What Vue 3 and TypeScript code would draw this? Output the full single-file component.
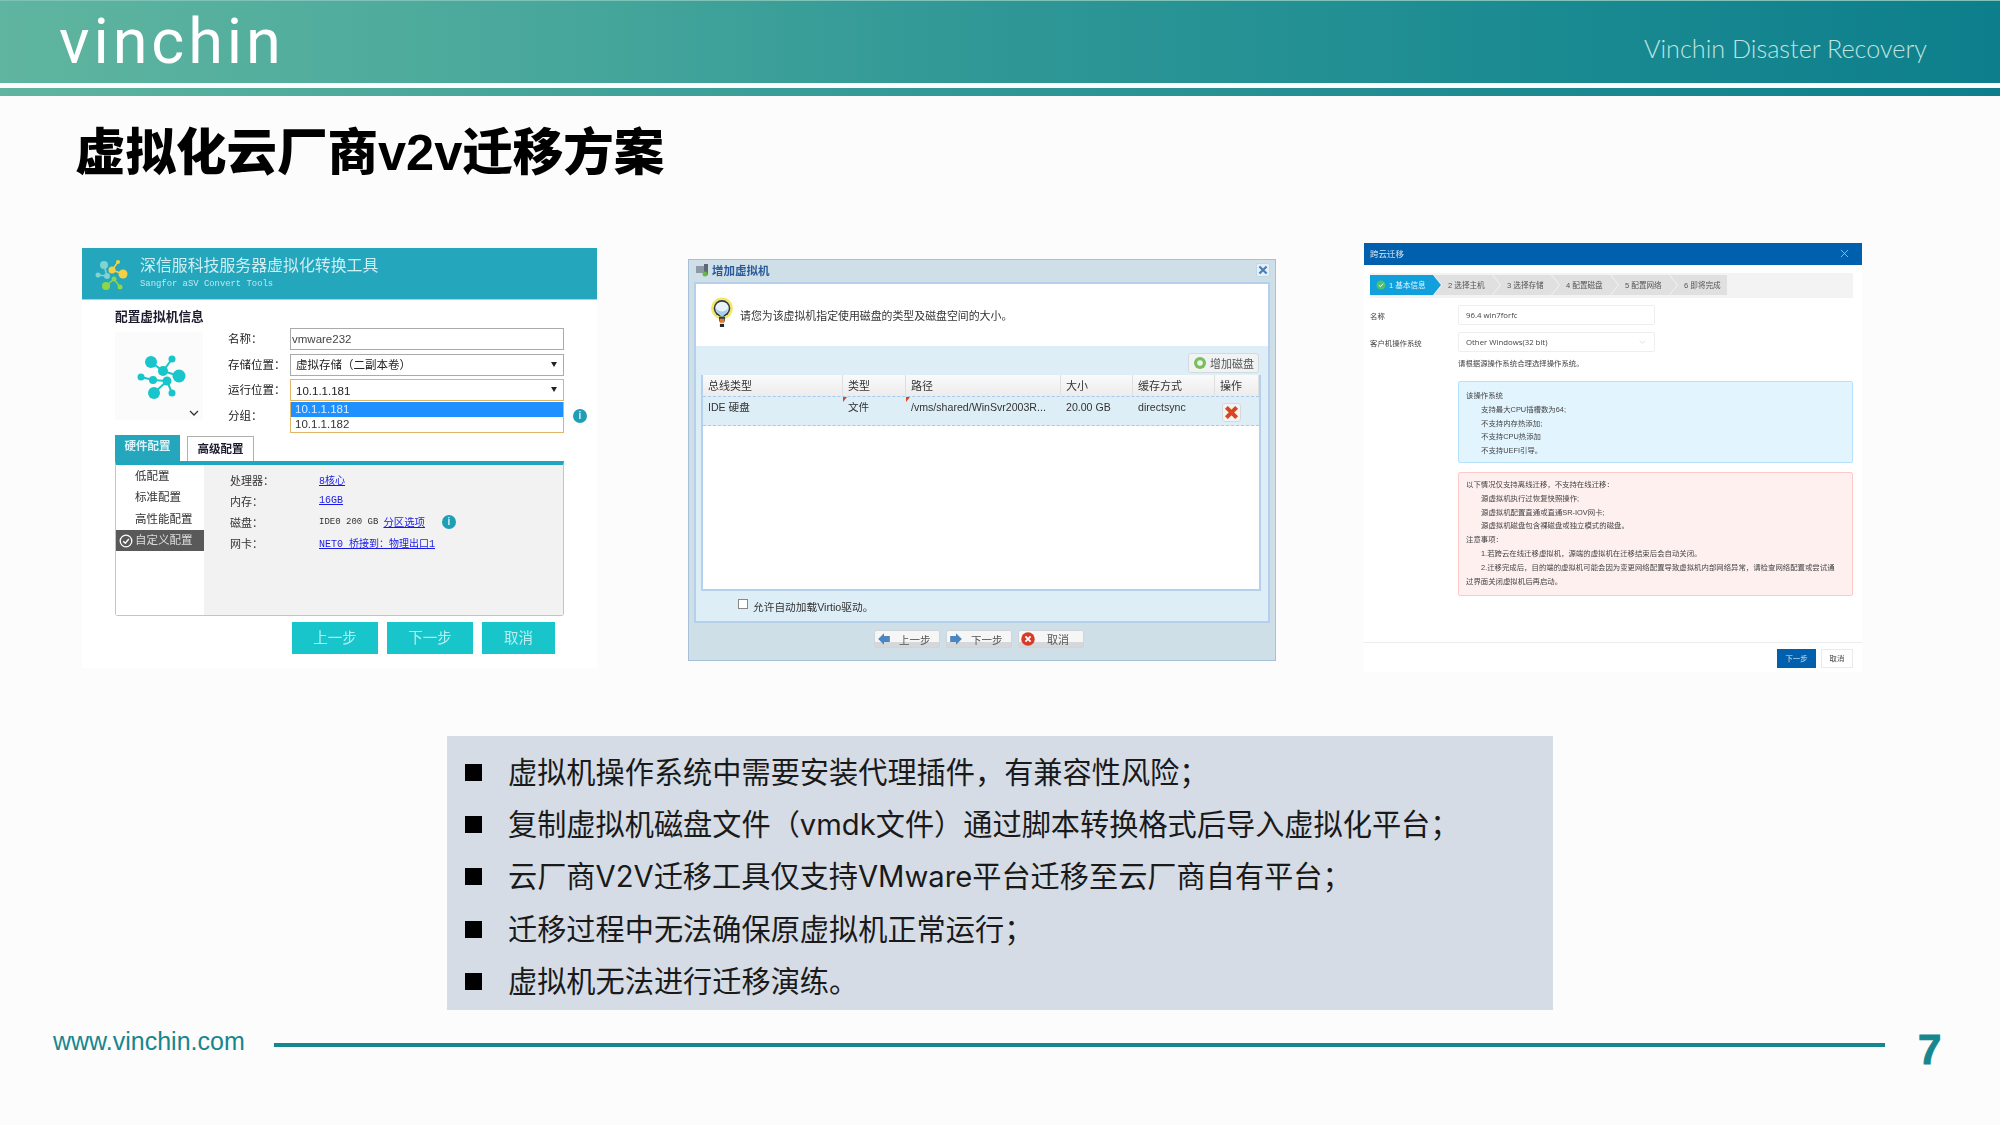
<script setup lang="ts">
const bullets = [
  '虚拟机操作系统中需要安装代理插件，有兼容性风险；',
  '复制虚拟机磁盘文件（vmdk文件）通过脚本转换格式后导入虚拟化平台；',
  '云厂商V2V迁移工具仅支持VMware平台迁移至云厂商自有平台；',
  '迁移过程中无法确保原虚拟机正常运行；',
  '虚拟机无法进行迁移演练。'
]

const profiles = ['低配置', '标准配置', '高性能配置']
const steps = ['2 选择主机', '3 选择存储', '4 配置磁盘', '5 配置网络', '6 即将完成']
const gridHead = ['总线类型', '类型', '路径', '大小', '缓存方式', '操作']

const infoLines = ['支持最大CPU插槽数为64;', '不支持内存热添加;', '不支持CPU热添加', '不支持UEFI引导。']
const offlineLines = ['源虚拟机执行过恢复快照操作;', '源虚拟机配置直通或直通SR-IOV网卡;', '源虚拟机磁盘包含裸磁盘或独立模式的磁盘。']
</script>

<template>
  <div class="slide">
    <header class="top">
      <div class="logo">vinchin</div>
      <div class="tagline">Vinchin Disaster Recovery</div>
    </header>
    <div class="band"></div>
    <h1 class="title">虚拟化云厂商v2v迁移方案</h1>

    <section class="shots">
      <!-- sangfor convert tool -->
      <div class="sf">
        <div class="sf-head">
          <svg class="sf-logo" viewBox="0 0 50 45">
            <g stroke-width="1.5" fill="none">
              <path d="M14 13L17 24M8 23L17 24" stroke="#7fd3d0" />
              <path d="M22 18L33 22M22 18L28 10" stroke="#f6cf45" />
              <path d="M16 34L24 27L30 35" stroke="#8fd646" />
            </g>
            <circle cx="14" cy="13" r="4" fill="#7fd3d0" />
            <circle cx="8" cy="23" r="2.5" fill="#7fd3d0" />
            <circle cx="17" cy="24" r="3" fill="#7fd3d0" />
            <circle cx="33" cy="22" r="4.5" fill="#f6cf45" />
            <circle cx="22" cy="18" r="3.5" fill="#f6cf45" />
            <circle cx="28" cy="10" r="2" fill="#f6cf45" />
            <circle cx="16" cy="34" r="4" fill="#8fd646" />
            <circle cx="24" cy="27" r="2.5" fill="#8fd646" />
            <circle cx="30" cy="35" r="2.5" fill="#8fd646" />
          </svg>
          <div>
            <div class="sf-name">深信服科技服务器虚拟化转换工具</div>
            <div class="sf-sub">Sangfor aSV Convert Tools</div>
          </div>
        </div>
        <div class="sf-body">
          <div class="sf-title">配置虚拟机信息</div>
          <div class="sf-top">
            <div class="sf-preview">
              <svg class="sf-mol" viewBox="0 0 88 88">
                <g stroke="#17c5cb" stroke-width="2" fill="none">
                  <path d="M36 30L48 39L57 27M48 39L64 44M26 45L38 48L52 49L39 61M52 49L57 61" />
                </g>
                <g fill="#17c5cb">
                  <circle cx="36" cy="30" r="6" />
                  <circle cx="57" cy="27" r="3.5" />
                  <circle cx="48" cy="39" r="5" />
                  <circle cx="64" cy="44" r="6.5" />
                  <circle cx="26" cy="45" r="3.5" />
                  <circle cx="38" cy="48" r="4" />
                  <circle cx="52" cy="49" r="4.5" />
                  <circle cx="39" cy="61" r="6" />
                  <circle cx="57" cy="61" r="3.5" />
                </g>
              </svg>
              <svg class="sf-chev" viewBox="0 0 10 6"><path d="M1 1L5 5L9 1" fill="none" stroke="#333" stroke-width="1.3" /></svg>
            </div>
            <div class="sf-form">
              <div class="sf-row">
                <span class="sf-label">名称：</span>
                <div class="sf-input">vmware232</div>
              </div>
              <div class="sf-row">
                <span class="sf-label">存储位置：</span>
                <div class="sf-input sf-select">虚拟存储（二副本卷）<i class="sf-caret"></i></div>
              </div>
              <div class="sf-row">
                <span class="sf-label">运行位置：</span>
                <div class="sf-input sf-select sf-focus">10.1.1.181<i class="sf-caret"></i></div>
              </div>
              <div class="sf-row sf-row-menu">
                <span class="sf-label sf-label-group">分组：</span>
                <div class="sf-menu">
                  <div class="sf-opt sf-opt-on">10.1.1.181</div>
                  <div class="sf-opt">10.1.1.182</div>
                </div>
                <span class="info info-a">i</span>
              </div>
            </div>
          </div>
          <div class="sf-tabs">
            <div class="sf-tab sf-tab-on">硬件配置</div>
            <div class="sf-tab">高级配置</div>
          </div>
          <div class="sf-panel">
            <div class="sf-side">
              <div v-for="p in profiles" :key="p" class="sf-item">{{ p }}</div>
              <div class="sf-item sf-item-on">
                <svg class="sf-check" viewBox="0 0 14 14">
                  <circle cx="7" cy="7" r="5.8" fill="none" stroke="#fff" stroke-width="1.3" />
                  <path d="M4.2 7.2L6.3 9.2L9.8 5" fill="none" stroke="#fff" stroke-width="1.4" />
                </svg>
                自定义配置
              </div>
            </div>
            <div class="sf-main">
              <div class="sf-spec"><span class="sf-key">处理器：</span><a class="sf-link">8核心</a></div>
              <div class="sf-spec"><span class="sf-key">内存：</span><a class="sf-link">16GB</a></div>
              <div class="sf-spec">
                <span class="sf-key">磁盘：</span><span class="sf-mono">IDE0 200 GB</span>
                <a class="sf-link sf-link-part">分区选项</a>
                <span class="info info-b">i</span>
              </div>
              <div class="sf-spec"><span class="sf-key">网卡：</span><a class="sf-link">NET0 桥接到：物理出口1</a></div>
            </div>
          </div>
          <div class="sf-btns">
            <div class="sf-btn">上一步</div>
            <div class="sf-btn">下一步</div>
            <div class="sf-btn sf-btn-s">取消</div>
          </div>
        </div>
      </div>

      <!-- add vm dialog -->
      <div class="az">
        <div class="az-title">
          <svg class="az-pc" viewBox="0 0 14 14">
            <rect x="1" y="3" width="8" height="7" fill="#8d9aa5" />
            <rect x="9" y="1" width="4" height="11" fill="#5d6a75" />
            <circle cx="10" cy="11" r="2.5" fill="#67b84a" />
          </svg>
          <span>增加虚拟机</span>
          <div class="az-close">
            <svg viewBox="0 0 10 10"><path d="M2 2L8 8M8 2L2 8" stroke="#4a7fb5" stroke-width="1.8" /></svg>
          </div>
        </div>
        <div class="az-body">
          <div class="az-tip">
            <svg class="az-bulb" viewBox="1 0 22 30">
              <circle cx="12" cy="11" r="10.5" fill="#f5e66a" />
              <circle cx="12" cy="11" r="8" fill="#2b3a44" />
              <circle cx="12" cy="11" r="6.5" fill="#e8f2fa" />
              <path d="M6 11C9 15 15 15 18 11C17 16 14 17 12 20C10 17 7 16 6 11Z" fill="#a9cdec" />
              <path d="M9 19H15L14.5 24H9.5Z" fill="#2b3a44" />
              <rect x="10" y="21" width="4" height="4" fill="#e87a2a" />
              <rect x="10" y="26" width="4" height="3" fill="#1d2830" />
            </svg>
            <span>请您为该虚拟机指定使用磁盘的类型及磁盘空间的大小。</span>
          </div>
          <div class="az-tools">
            <div class="az-add">
              <svg viewBox="0 0 14 14">
                <circle cx="7" cy="7" r="6" fill="#79bf5e" />
                <circle cx="7" cy="7" r="2.8" fill="#eef6ea" />
              </svg>
              增加磁盘
            </div>
          </div>
          <div class="az-grid">
            <div class="az-cols az-cols-head">
              <span v-for="h in gridHead" :key="h">{{ h }}</span>
            </div>
            <div class="az-cols az-cols-row">
              <span>IDE 硬盘</span>
              <span class="az-dirty">文件</span>
              <span class="az-dirty">/vms/shared/WinSvr2003R...</span>
              <span>20.00 GB</span>
              <span>directsync</span>
              <span>
                <div class="az-del">
                  <svg viewBox="0 0 10 10"><path d="M2 2L8 8M8 2L2 8" stroke="#d8451f" stroke-width="2.4" /></svg>
                </div>
              </span>
            </div>
          </div>
          <div class="az-check"><i></i>允许自动加载Virtio驱动。</div>
        </div>
        <div class="az-foot">
          <div class="az-btn">
            <svg viewBox="0 0 12 12"><path d="M1 6L6 1V3.5H11V8.5H6V11Z" fill="#4c86c0" /></svg>
            <span>上一步</span>
          </div>
          <div class="az-btn">
            <svg viewBox="0 0 12 12"><path d="M11 6L6 1V3.5H1V8.5H6V11Z" fill="#4c86c0" /></svg>
            <span>下一步</span>
          </div>
          <div class="az-btn az-btn-c">
            <svg viewBox="0 0 12 12">
              <circle cx="6" cy="6" r="5.8" fill="#d63b2a" />
              <path d="M3.8 3.8L8.2 8.2M8.2 3.8L3.8 8.2" stroke="#fff" stroke-width="1.6" />
            </svg>
            <span>取消</span>
          </div>
        </div>
      </div>

      <!-- cross cloud migration dialog -->
      <div class="cc">
        <div class="cc-head">
          <span>跨云迁移</span>
          <svg viewBox="0 0 10 10"><path d="M1 1L9 9M9 1L1 9" stroke="#a9c8e2" stroke-width="0.9" /></svg>
        </div>
        <div class="cc-steps">
          <div class="cc-step cc-step-on">
            <svg viewBox="0 0 10 10">
              <circle cx="5" cy="5" r="4.5" fill="#4cc36a" />
              <path d="M2.8 5.2L4.4 6.7L7.2 3.6" fill="none" stroke="#fff" stroke-width="1" />
            </svg>
            1 基本信息
          </div>
          <div v-for="s in steps" :key="s" class="cc-step">{{ s }}</div>
        </div>
        <div class="cc-field">
          <span class="cc-label">名称</span>
          <div class="cc-input">96.4 win7forfc</div>
        </div>
        <div class="cc-field cc-field-os">
          <span class="cc-label">客户机操作系统</span>
          <div class="cc-input">
            Other Windows(32 bit)
            <svg viewBox="0 0 10 6"><path d="M1 1L5 5L9 1" fill="none" stroke="#c5c5c5" stroke-width="0.8" /></svg>
          </div>
        </div>
        <p class="cc-hint">请根据源操作系统合理选择操作系统。</p>
        <div class="cc-box cc-box-info">
          <p>该操作系统</p>
          <p v-for="l in infoLines" :key="l" class="cc-in">{{ l }}</p>
        </div>
        <div class="cc-box cc-box-warn">
          <p>以下情况仅支持离线迁移，不支持在线迁移：</p>
          <p v-for="l in offlineLines" :key="l" class="cc-in">{{ l }}</p>
          <p>注意事项：</p>
          <p class="cc-first">1.若跨云在线迁移虚拟机，源端的虚拟机在迁移结束后会自动关闭。</p>
          <p class="cc-first">2.迁移完成后，目的端的虚拟机可能会因为变更网络配置导致虚拟机内部网络异常，请检查网络配置或尝试通过界面关闭虚拟机后再启动。</p>
        </div>
        <div class="cc-foot">
          <div class="cc-btn cc-btn-on">下一步</div>
          <div class="cc-btn">取消</div>
        </div>
      </div>
    </section>

    <ul class="points">
      <li v-for="b in bullets" :key="b">{{ b }}</li>
    </ul>

    <footer class="foot">
      <span class="site">www.vinchin.com</span>
      <div class="rule"></div>
      <span class="page">7</span>
    </footer>
  </div>
</template>

<style>
html,
body {
  margin: 0;
  background: #fcfcfc;
}
</style>

<style scoped>
.slide {
  width: 2000px;
  height: 1125px;
  overflow: hidden;
  background: #fcfcfc;
  font-family: "Liberation Sans", "Noto Sans CJK SC", sans-serif;
  color: #222;
}

p {
  margin: 0;
}

.top {
  height: 83px;
  box-sizing: border-box;
  padding: 0 73px 0 59px;
  display: flex;
  align-items: center;
  justify-content: space-between;
  border-top: 1px solid #7fc3b8;
  background: linear-gradient(90deg, #5fb59f 0%, #4aa99c 25%, #2f9796 50%, #1c8c92 75%, #0d7f8c 100%);
}

.logo {
  font-family: Roboto, sans-serif;
  font-size: 63px;
  line-height: 72px;
  letter-spacing: 3.9px;
  color: #fff;
}

.tagline {
  font-family: "Lato", sans-serif;
  font-weight: 300;
  font-size: 25.2px;
  color: #bde3e0;
  margin-top: 12px;
}

.band {
  height: 8px;
  margin-top: 5px;
  background: linear-gradient(90deg, #5fb59f 0%, #2f9796 50%, #0d7f8c 100%);
}

.title {
  margin: 26px 0 0 75px;
  height: 60px;
  font-family: "Liberation Sans", "Noto Sans CJK SC", sans-serif;
  font-size: 50.5px;
  line-height: 62px;
  font-weight: 900;
  color: #000;
  white-space: nowrap;
}

.shots {
  display: flex;
  align-items: flex-start;
  height: 429px;
  margin-top: 61px;
  font-size: 11px;
}

.sf,
.az,
.cc {
  filter: blur(0.35px);
  flex: none;
  box-sizing: border-box;
}

/* left screenshot */
.sf {
  width: 515px;
  height: 420px;
  margin: 5px 0 0 82px;
  background: #fff;
}

.sf-head {
  height: 52px;
  display: flex;
  align-items: center;
  background: #24a6bd;
  border-bottom: 1px solid #9ed4de;
  box-sizing: border-box;
}

.sf-logo {
  width: 50px;
  height: 45px;
  margin: 2px 0 0 8px;
  flex: none;
}

.sf-name {
  font-size: 15.9px;
  line-height: 20px;
  color: #cdeef2;
  margin-top: -1px;
}

.sf-sub {
  font-family: "Liberation Mono", monospace;
  font-size: 8.9px;
  line-height: 14px;
  color: #bfe8ee;
  margin-top: 1px;
}

.sf-body {
  padding-left: 33px;
}

.sf-title {
  margin-top: 8px;
  height: 16px;
  font-size: 12.7px;
  line-height: 18px;
  font-weight: 700;
  color: #1c1c2e;
}

.sf-top {
  display: flex;
  margin-top: 4px;
}

.sf-preview {
  position: relative;
  width: 88px;
  height: 88px;
  margin-top: 4px;
  background: #fbfbfb;
}

.sf-mol {
  width: 88px;
  height: 88px;
  display: block;
}

.sf-chev {
  position: absolute;
  left: 74px;
  top: 78px;
  width: 10px;
  height: 6px;
}

.sf-form {
  margin-left: 25px;
  display: flex;
  flex-direction: column;
  gap: 3.5px;
}

.sf-row {
  display: flex;
  align-items: center;
  height: 22px;
}

.sf-row-menu {
  height: 31px;
  align-items: center;
  margin-top: -2.5px;
}

.sf-label {
  width: 62px;
  flex: none;
  font-size: 11.5px;
  color: #222;
  margin-top: -2px;
}

.sf-label-group {
  margin-top: -6px;
}

.sf-input {
  position: relative;
  width: 274px;
  height: 22px;
  box-sizing: border-box;
  border: 1.5px solid #aaa;
  background: #fff;
  font-size: 11.5px;
  line-height: 21px;
  padding-left: 1px;
  color: #444;
}

.sf-select {
  padding-left: 5px;
  color: #222;
}

.sf-focus {
  border-color: #e0b567;
  line-height: 22px;
}

.sf-caret {
  position: absolute;
  right: 6px;
  top: 7px;
  border-left: 3px solid transparent;
  border-right: 3px solid transparent;
  border-top: 5px solid #222;
}

.sf-menu {
  width: 274px;
  height: 31px;
  box-sizing: border-box;
  border: 1px solid #e0b567;
  border-top: 0;
  background: #fff;
}

.sf-opt {
  height: 15px;
  font-size: 11.5px;
  line-height: 15px;
  padding-left: 4px;
  color: #333;
}

.sf-opt-on {
  background: #1e90ff;
  color: #dcedff;
}

.info {
  flex: none;
  width: 14px;
  height: 14px;
  border-radius: 50%;
  background: #1f9eb5;
  color: #d9f2f6;
  text-align: center;
  font-size: 10px;
  line-height: 14px;
  font-weight: 700;
}

.info-a {
  margin: -3px 0 0 9px;
}

.info-b {
  margin-left: 17px;
}

.sf-tabs {
  display: flex;
  gap: 7px;
  align-items: flex-end;
  margin-top: 2px;
  height: 26px;
}

.sf-tab {
  width: 67px;
  height: 25px;
  box-sizing: border-box;
  border: 1.5px solid #b0b0b0;
  border-bottom: 0;
  text-align: center;
  font-size: 11.5px;
  line-height: 24px;
  font-weight: 700;
  color: #1c1c2e;
}

.sf-tab-on {
  width: 65px;
  height: 26px;
  border: 0;
  background: #24a6bd;
  color: #d8f3f7;
  line-height: 23px;
}

.sf-panel {
  width: 449px;
  height: 155px;
  box-sizing: border-box;
  display: flex;
  border: 1px solid #c4c4c4;
  border-top: 4px solid #1fa8bd;
  border-radius: 0 0 3px 3px;
}

.sf-side {
  width: 88px;
  flex: none;
  padding-top: 1px;
  background: #fff;
}

.sf-item {
  height: 21.3px;
  padding-left: 19px;
  font-size: 11.5px;
  line-height: 21.3px;
  color: #333;
}

.sf-item-on {
  position: relative;
  background: #595959;
  color: #ddd;
}

.sf-check {
  position: absolute;
  left: 3px;
  top: 4px;
  width: 14px;
  height: 14px;
}

.sf-main {
  flex: 1;
  padding: 4px 0 0 26px;
  background: #f2f2f2;
}

.sf-spec {
  display: flex;
  align-items: center;
  height: 21px;
}

.sf-key {
  width: 89px;
  flex: none;
  font-size: 11px;
  color: #333;
}

.sf-link {
  font-family: "Liberation Mono", "Noto Sans CJK SC", monospace;
  font-size: 10px;
  color: #1a1ae6;
  text-decoration: underline;
}

.sf-link-part {
  margin-left: 5px;
  font-size: 10.4px;
}

.sf-mono {
  font-family: "Liberation Mono", monospace;
  font-size: 9px;
  color: #333;
}

.sf-btns {
  display: flex;
  gap: 9px;
  margin: 6px 0 0 177px;
}

.sf-btn {
  width: 86px;
  height: 32px;
  background: #17c5cb;
  color: #b9eef0;
  text-align: center;
  font-size: 14.5px;
  line-height: 32px;
}

.sf-btn-s {
  width: 73px;
}

/* middle screenshot */
.az {
  width: 588px;
  height: 402px;
  margin: 16px 0 0 91px;
  background: #cfdfe8;
  border: 1px solid #a5c0d8;
}

.az-title {
  height: 22px;
  box-sizing: border-box;
  display: flex;
  align-items: center;
  padding: 0 5px 2px 6px;
  font-size: 11.5px;
  font-weight: 700;
  color: #2a5a9a;
}

.az-pc {
  width: 14px;
  height: 14px;
  margin-right: 3px;
}

.az-close {
  margin-left: auto;
  width: 12px;
  height: 12px;
  background: #e4eff7;
  border: 1px solid #c3d7e6;
  border-radius: 2px;
}

.az-close svg {
  display: block;
  width: 12px;
  height: 12px;
}

.az-body {
  height: 341px;
  margin: 0 5px;
  box-sizing: border-box;
  border: 2px solid #b4d0ec;
  background: #ddeef7;
}

.az-tip {
  height: 62px;
  display: flex;
  align-items: center;
  padding-left: 14px;
  background: #fff;
  font-size: 10.9px;
  color: #333;
}

.az-bulb {
  width: 24px;
  height: 31px;
  margin: -6px 6px 0 0;
  flex: none;
}

.az-tools {
  height: 29px;
  display: flex;
  justify-content: flex-end;
  padding: 7px 9px 0 0;
  box-sizing: border-box;
}

.az-add {
  width: 71px;
  height: 20px;
  box-sizing: border-box;
  display: flex;
  align-items: center;
  gap: 3px;
  padding-left: 4px;
  border: 1px solid #d3dadf;
  border-radius: 3px;
  background: #f0f2f3;
  font-size: 11px;
  color: #555;
}

.az-add svg {
  width: 14px;
  height: 14px;
}

.az-grid {
  width: 560px;
  height: 216px;
  box-sizing: border-box;
  margin-left: 5px;
  background: #fff;
  border: 2px solid #b4d0ec;
  border-top: 0;
}

.az-cols {
  display: grid;
  grid-template-columns: 140px 63px 155px 72px 82px 44px;
}

.az-cols span {
  position: relative;
  padding-left: 5px;
  white-space: nowrap;
  overflow: hidden;
}

.az-cols-head {
  height: 21px;
  background: linear-gradient(#fafafa, #ececec);
  line-height: 22px;
  font-size: 11px;
  color: #333;
}

.az-cols-head span {
  border-right: 1px solid #dfdfdf;
  box-sizing: border-box;
}

.az-cols-row {
  height: 30px;
  box-sizing: border-box;
  background: #ddeef7;
  border-top: 1px dashed #a9c9e8;
  border-bottom: 1px dashed #a9c9e8;
  line-height: 20px;
  font-size: 10.6px;
  color: #333;
}

.az-dirty::before {
  content: "";
  position: absolute;
  left: 0;
  top: 0;
  border-top: 5px solid #d8451f;
  border-right: 4px solid transparent;
}

.az-del {
  width: 19px;
  height: 19px;
  margin: 6px 0 0 2px;
  box-sizing: border-box;
  border: 1px solid #d8d8d8;
  border-radius: 3px;
  background: #f3f3f3;
}

.az-del svg {
  display: block;
  width: 17px;
  height: 17px;
}

.az-check {
  height: 30px;
  display: flex;
  align-items: center;
  padding-left: 42px;
  font-size: 10.7px;
  color: #333;
}

.az-check i {
  width: 10px;
  height: 10px;
  margin: -4px 5px 0 0;
  box-sizing: border-box;
  border: 1px solid #888;
  background: #fff;
}

.az-foot {
  display: flex;
  gap: 6px;
  padding: 7px 0 0 185px;
}

.az-btn {
  width: 66px;
  height: 18px;
  box-sizing: border-box;
  display: flex;
  align-items: center;
  padding-left: 2px;
  border: 1px solid #cfd6da;
  border-radius: 2px;
  background: linear-gradient(#f6f6f6 70%, #d4d8da 70%);
  font-size: 10.5px;
  color: #555;
}

.az-btn svg {
  width: 14px;
  height: 14px;
  flex: none;
}

.az-btn span {
  margin-left: 8px;
}

.az-btn-c span {
  margin-left: 12px;
  font-size: 11px;
}

/* right screenshot */
.cc {
  width: 498px;
  height: 429px;
  margin-left: 88px;
  background: #fff;
  font-size: 7.4px;
  color: #444;
}

.cc-head {
  height: 22px;
  display: flex;
  align-items: center;
  justify-content: space-between;
  padding: 0 13px 2px 6px;
  box-sizing: border-box;
  background: #0060ad;
  color: #d5e5f3;
  font-size: 8.5px;
}

.cc-head svg {
  width: 9px;
  height: 9px;
}

.cc-steps {
  display: flex;
  width: 483px;
  height: 25px;
  box-sizing: border-box;
  margin: 8px 0 0 6px;
  padding-top: 2px;
  background: #f3f3f3;
}

.cc-step {
  width: 66px;
  height: 20px;
  box-sizing: border-box;
  margin-left: -7px;
  padding-left: 14px;
  line-height: 21px;
  font-size: 7.6px;
  white-space: nowrap;
  background: #e0e0e0;
  color: #555;
  clip-path: polygon(0 0, calc(100% - 8px) 0, 100% 50%, calc(100% - 8px) 100%, 0 100%, 8px 50%);
}

.cc-step:last-child {
  width: 57px;
  clip-path: polygon(0 0, 100% 0, 100% 100%, 0 100%, 8px 50%);
}

.cc-step-on {
  width: 71px;
  margin-left: 0;
  padding-left: 19px;
  position: relative;
  background: #11a0dc;
  color: #e3f4fb;
  clip-path: polygon(0 0, calc(100% - 8px) 0, 100% 50%, calc(100% - 8px) 100%, 0 100%);
}

.cc-step-on svg {
  position: absolute;
  left: 6px;
  top: 5px;
  width: 10px;
  height: 10px;
}

.cc-field {
  display: flex;
  align-items: center;
  margin-top: 7px;
  padding-left: 6px;
}

.cc-field-os {
  margin-top: 7px;
}

.cc-label {
  width: 88px;
  flex: none;
}

.cc-input {
  width: 197px;
  height: 20px;
  box-sizing: border-box;
  display: flex;
  align-items: center;
  justify-content: space-between;
  padding: 0 8px 0 7px;
  border: 1px solid #eee;
  border-radius: 2px;
  font-family: "Open Sans", "Noto Sans CJK SC", sans-serif;
  font-size: 7.8px;
}

.cc-input svg {
  width: 7px;
  height: 4px;
}

.cc-hint {
  margin: 5px 0 0 94px;
  line-height: 14px;
}

.cc-box {
  width: 395px;
  box-sizing: border-box;
  margin-left: 94px;
  padding: 7px 11px 0 7px;
  border-radius: 2px;
  line-height: 13.8px;
}

.cc-box-info {
  height: 82px;
  margin-top: 10px;
  background: #e2f5ff;
  border: 1px solid #b5e2fa;
}

.cc-box-warn {
  height: 124px;
  margin-top: 9px;
  padding-top: 5px;
  background: #fff0f0;
  border: 1px solid #ffc9c9;
}

.cc-in {
  padding-left: 15px;
}

.cc-first {
  text-indent: 15px;
}

.cc-foot {
  display: flex;
  justify-content: flex-end;
  gap: 5px;
  height: 30px;
  margin-top: 46px;
  padding: 6px 9px 0 0;
  box-sizing: border-box;
  border-top: 1px solid #ececec;
}

.cc-btn {
  width: 32px;
  height: 19px;
  box-sizing: border-box;
  border: 1px solid #eaeaea;
  text-align: center;
  line-height: 17px;
}

.cc-btn-on {
  width: 39px;
  background: #0060ad;
  border-color: #0060ad;
  color: #d5e5f3;
}

/* bullets */
.points {
  width: 1106px;
  height: 274px;
  box-sizing: border-box;
  margin: 64px 0 0 447px;
  padding: 11px 0 0 61px;
  list-style: none;
  background: #d6dce5;
  font-family: Inter, "Noto Sans CJK SC", sans-serif;
  font-size: 29.2px;
  color: #1a1a1a;
}

.points li {
  position: relative;
  height: 52.2px;
  line-height: 52.2px;
  white-space: nowrap;
}

.points li::before {
  content: "";
  position: absolute;
  left: -43px;
  top: 17px;
  width: 17px;
  height: 17px;
  background: #000;
}

/* footer */
.foot {
  display: flex;
  align-items: center;
  height: 40px;
  margin-top: 15px;
  padding-left: 53px;
}

.site {
  width: 190px;
  flex: none;
  font-size: 25px;
  color: #17868f;
  padding-bottom: 7px;
  white-space: nowrap;
}

.rule {
  width: 1611px;
  height: 4px;
  margin-left: 31px;
  background: #16868f;
}

.page {
  margin-left: 33px;
  padding-top: 9px;
  font-size: 42px;
  line-height: 40px;
  font-weight: 900;
  color: #16868f;
  -webkit-text-stroke: 1px #16868f;
}
</style>
